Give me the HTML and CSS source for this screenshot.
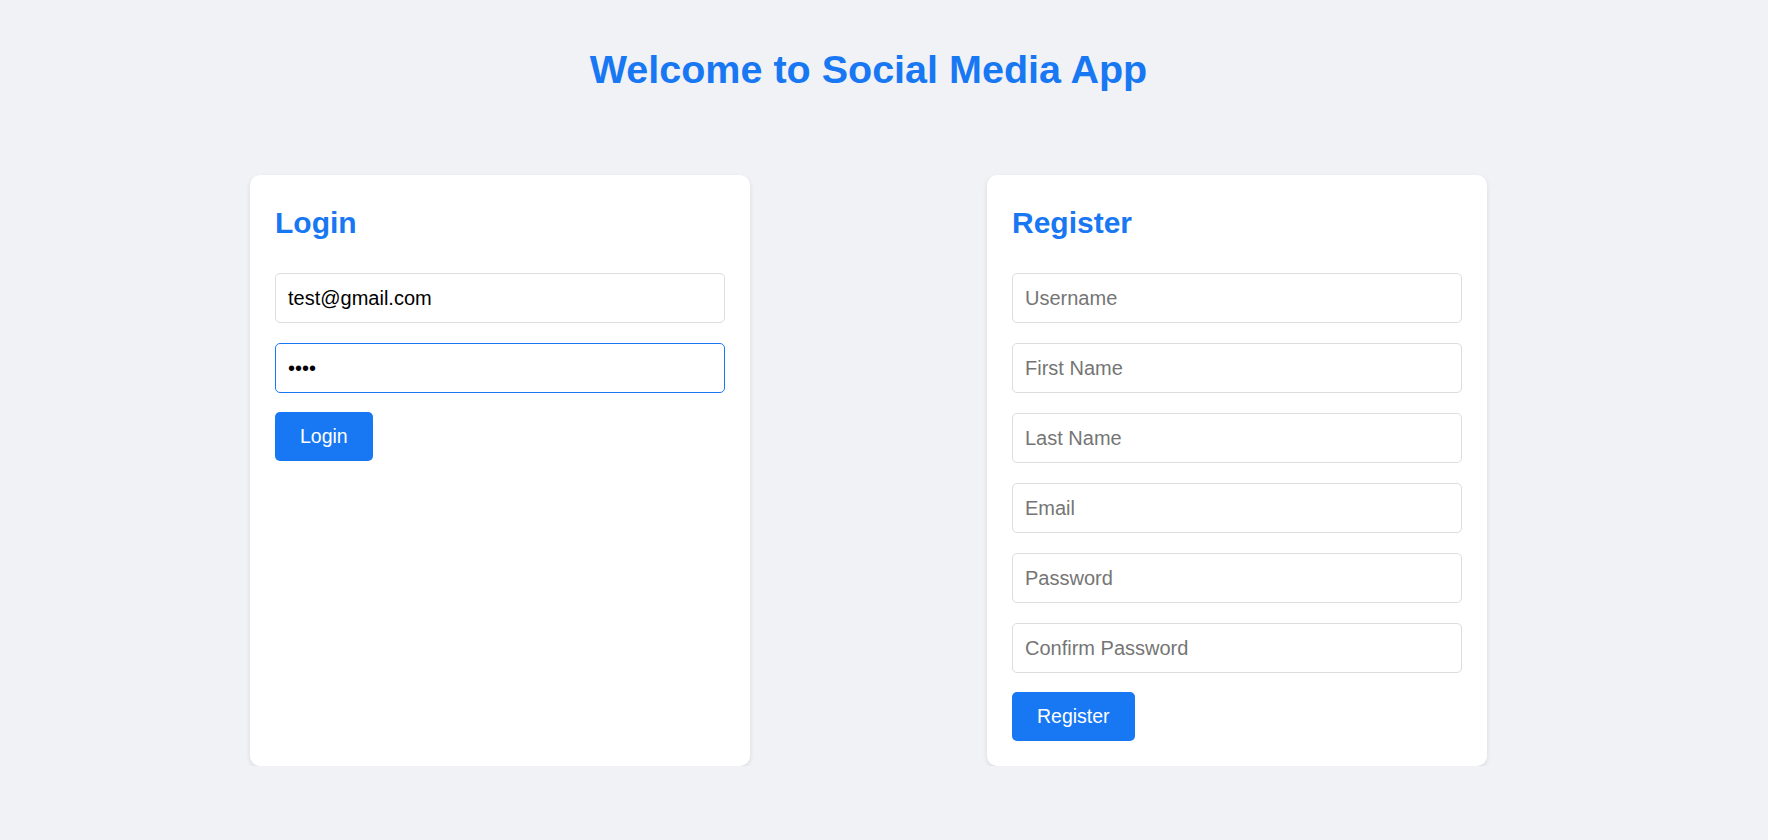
FILE: index.html
```html
<!DOCTYPE html>
<html lang="en">
<head>
<meta charset="utf-8">
<title>Social Media App</title>
<link rel="stylesheet" href="styles.css">
</head>
<body>
<div class="app">
  <h1 class="title">Welcome to Social Media App</h1>
  <div class="forms">
    <div class="card">
      <h2 class="card-title">Login</h2>
      <form class="form">
        <input class="field" type="email" placeholder="Email" value="test@gmail.com">
        <input class="field field-active" type="password" placeholder="Password" value="test">
        <button class="btn" type="button">Login</button>
      </form>
    </div>
    <div class="card">
      <h2 class="card-title">Register</h2>
      <form class="form">
        <input class="field" type="text" placeholder="Username">
        <input class="field" type="text" placeholder="First Name">
        <input class="field" type="text" placeholder="Last Name">
        <input class="field" type="email" placeholder="Email">
        <input class="field" type="password" placeholder="Password">
        <input class="field" type="password" placeholder="Confirm Password">
        <button class="btn" type="button">Register</button>
      </form>
    </div>
  </div>
</div>
</body>
</html>
```

FILE: styles.css
```css
html, body {
  margin: 0;
  padding: 0;
  background: #f0f2f5;
  font-family: "Liberation Sans", Arial, sans-serif;
}

.app {
  width: 1737px;
}

.title {
  margin: 46px 0 0;
  font-size: 39.5px;
  line-height: 46px;
  font-weight: bold;
  color: #1877f2;
  text-align: center;
}

.forms {
  display: flex;
  justify-content: center;
  align-items: stretch;
  gap: 237px;
  margin-top: 83px;
}

.card {
  width: 500px;
  box-sizing: border-box;
  padding: 25px;
  background: #ffffff;
  border-radius: 10px;
  box-shadow: 0 2px 5px rgba(0, 0, 0, 0.1);
}

.card-title {
  margin: 2px 0 29px;
  font-size: 30px;
  line-height: 42px;
  font-weight: bold;
  color: #1877f2;
}

.form {
  display: flex;
  flex-direction: column;
  align-items: flex-start;
  gap: 20px;
}

.field {
  width: 100%;
  height: 50px;
  box-sizing: border-box;
  padding: 1px 12px 0;
  border: 1px solid #dddddd;
  border-radius: 5px;
  background: #ffffff;
  font-family: "Liberation Sans", Arial, sans-serif;
  font-size: 20px;
  color: #000000;
  outline: none;
}

.field::placeholder {
  color: #757575;
}

.field-active {
  border-color: #1877f2;
}

.btn {
  margin-top: -1px;
  height: 49px;
  padding: 0 25px;
  border: none;
  border-radius: 5px;
  background: #1877f2;
  color: #ffffff;
  font-family: "Liberation Sans", Arial, sans-serif;
  font-size: 19.5px;
  cursor: pointer;
}
```
